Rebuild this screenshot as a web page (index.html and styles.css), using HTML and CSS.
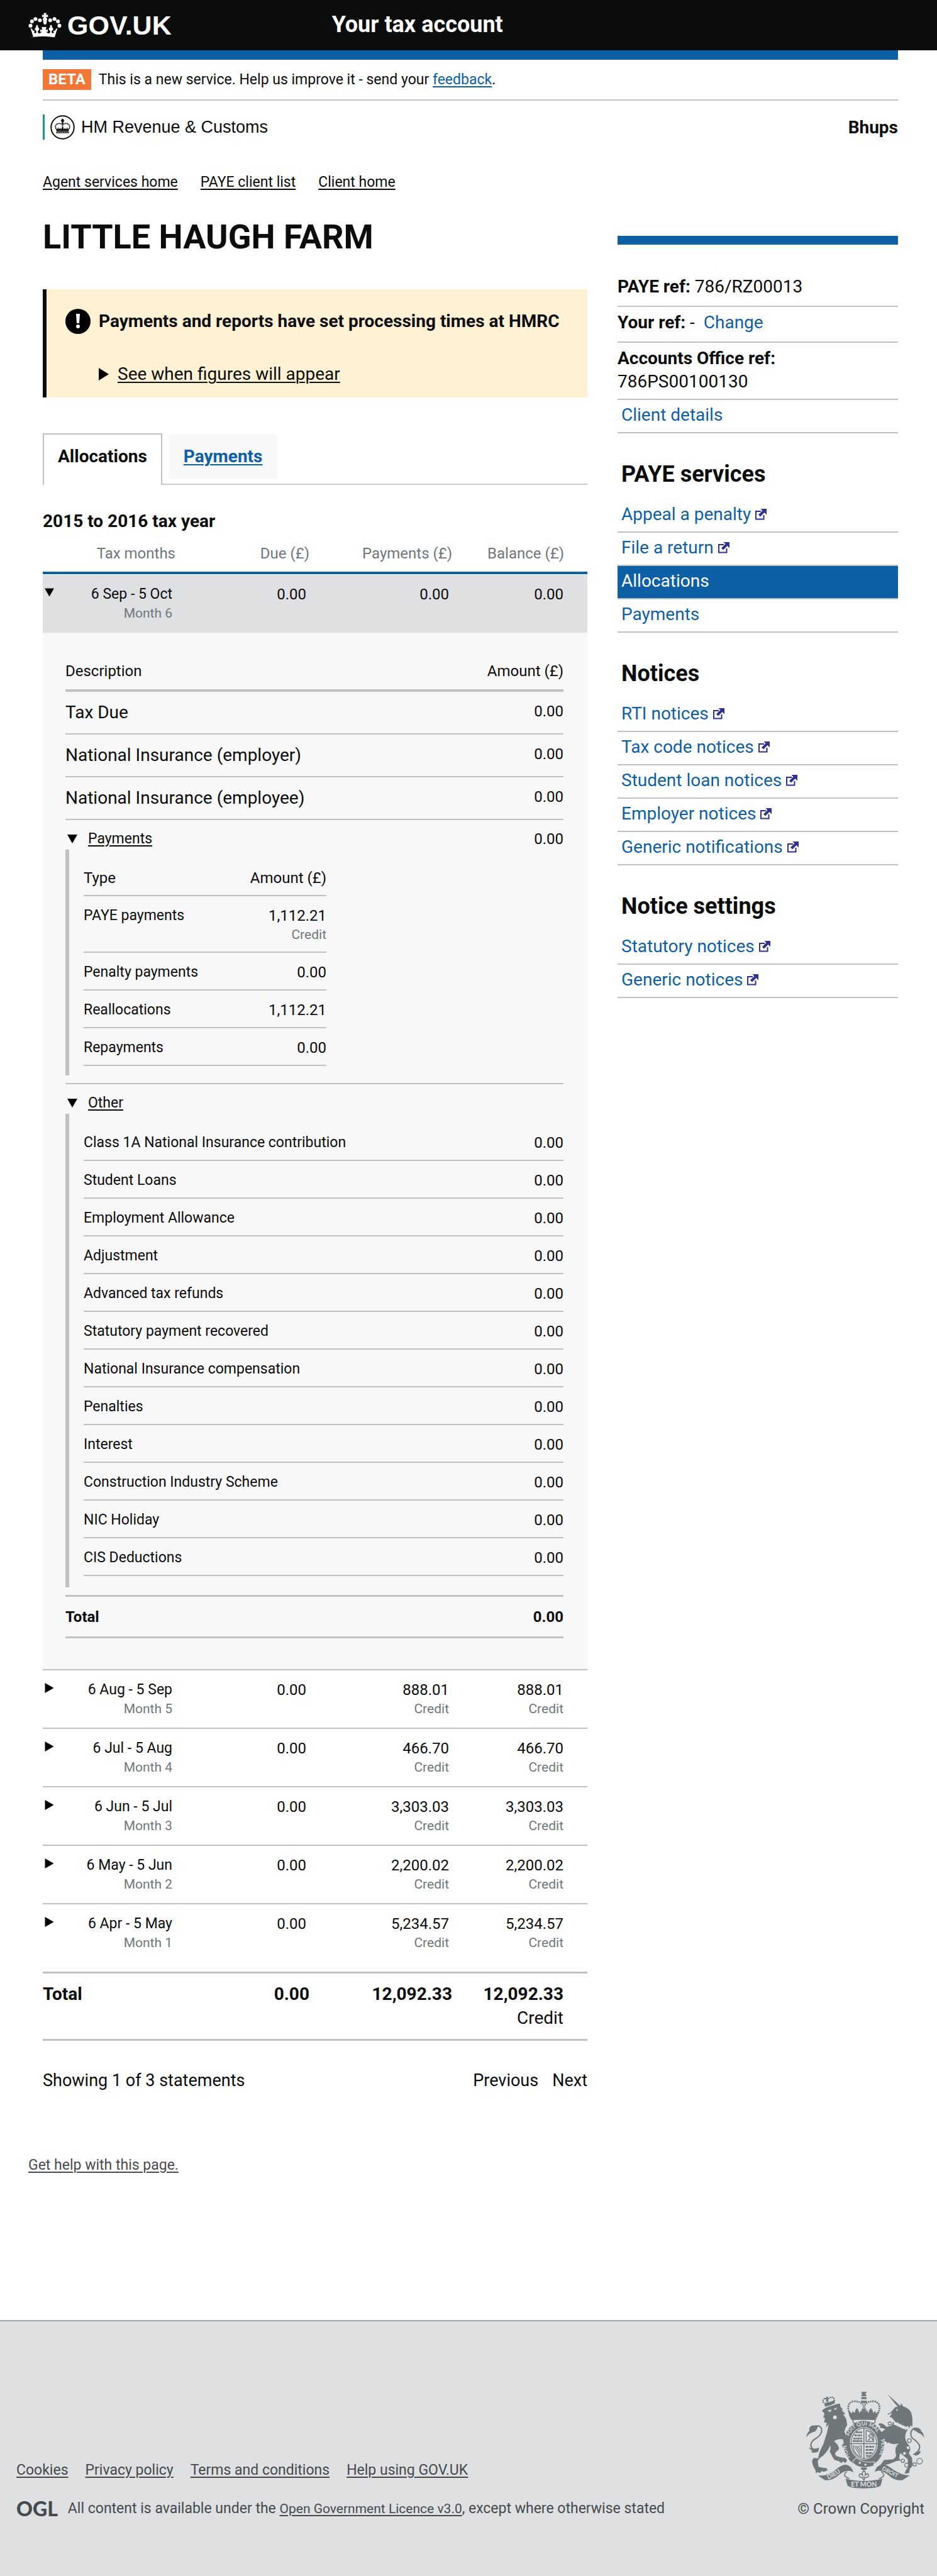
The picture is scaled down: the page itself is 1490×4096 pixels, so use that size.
FILE: index.html
```html
<!DOCTYPE html>
<html lang="en">
<head>
<meta charset="utf-8">
<meta name="viewport" content="width=device-width, initial-scale=1">
<title>Your tax account - LITTLE HAUGH FARM</title>
<link rel="stylesheet" href="styles.css">
</head>
<body>
<svg class="defs" aria-hidden="true">
  <symbol id="external" viewBox="0 0 18 18">
    <path d="M9 4H1v12.500h12.500V10" fill="none" stroke="#2e3191" stroke-width="2"/>
    <path d="M8.500 0H18v9.500l-3.500-3.500-6.500 6.500-3-3L11.500 3z" fill="#2e3191"/>
  </symbol>
</svg>

<header class="site-header">
  <a class="logo" href="#">
    <svg class="logo-crown" viewBox="30 30 210 157" aria-hidden="true">
      <g fill="#fff">
        <circle cx="44" cy="112" r="12"/><circle cx="53" cy="85" r="12"/><circle cx="75" cy="70" r="12"/><circle cx="103" cy="78" r="12"/>
        <circle cx="168" cy="78" r="12"/><circle cx="195" cy="70" r="12"/><circle cx="217" cy="85" r="12"/><circle cx="226" cy="112" r="12"/>
        <path d="M126 32h19l-4 13 13-3v17l-14-4q8 10 9 18l-3 8q3 20-11 25-14-5-11-25l-3-8q1-8 9-18l-13 4V42l13 3z"/>
        <path d="M62 185 44 127q12 3 16 17 6-3 11 1-4 3-4 9 3 8 11 4 7-6 0-16-8-2-7-10 2-9 8-10-3-10 6-16 9 6 6 16 6 1 8 10 1 8-7 10-5 12 3 17 15 4 20-10l-10 3v-17l13 4-4-19h30l-4 19 13-4v17l-10-3q5 14 20 10 8-5 3-17-8-2-7-10 2-9 8-10-3-10 6-16 9 6 6 16 6 1 8 10 1 8-7 10-7 10 0 16 8 4 11-4 0-6-4-9 5-4 11-1 4-14 16-17l-18 58q-73-12-146 0z"/>
      </g>
    </svg>
    <span>GOV.UK</span>
  </a>
  <p class="service-name">Your tax account</p>
</header>

<div class="page">
  <div class="beta">
    <strong class="tag">BETA</strong>
    <p>This is a new service. Help us improve it - send your <a href="#">feedback</a>.</p>
  </div>

  <div class="org-row">
    <div class="org">
      <svg class="org-crest" viewBox="62 22 158 158" aria-hidden="true">
        <circle cx="141" cy="101" r="74" fill="#fff" stroke="#0b0c0c" stroke-width="8"/>
        <g fill="#0b0c0c">
          <path d="M135 46h12v7h5v8h-5v7h-12v-7h-5v-8h5z"/><circle cx="141" cy="73" r="6"/>
          <path d="M100 138v-8q41-9 82 0v8z"/>
          <path d="M103 127l-6-22 10 9 4-14 7 14 8-10 5 10 10-18 10 18 5-10 8 10 7-14 4 14 10-9-6 22q-38-8-76 0z"/>
        </g>
        <path d="M99 110q-10-18 5-29 18-11 35 2M183 110q10-18-5-29-18-11-35 2" fill="none" stroke="#0b0c0c" stroke-width="7" stroke-dasharray="6 2"/>
        <path d="M141 78v26" stroke="#0b0c0c" stroke-width="8" stroke-dasharray="5 2"/>
        <path d="M108 134h66" stroke="#fff" stroke-width="3" stroke-dasharray="10 4"/>
      </svg>
      <span>HM Revenue &amp; Customs</span>
    </div>
    <strong class="user">Bhups</strong>
  </div>

  <nav class="crumbs" aria-label="Breadcrumb">
    <a href="#">Agent services home</a>
    <a href="#">PAYE client list</a>
    <a href="#">Client home</a>
  </nav>

  <div class="columns">
    <main>
      <h1>LITTLE HAUGH FARM</h1>

      <section class="notice">
        <div class="notice-head">
          <svg class="notice-icon" viewBox="0 0 40 40" aria-hidden="true">
            <circle cx="20" cy="20" r="20"/>
            <path d="M17 8h6l-1 15h-4z" fill="#fff"/><circle cx="20" cy="28" r="3" fill="#fff"/>
          </svg>
          <strong>Payments and reports have set processing times at HMRC</strong>
        </div>
        <details class="notice-more">
          <summary><svg class="tri" viewBox="0 0 16 20" aria-hidden="true"><path d="M0 0l16 10L0 20z"/></svg><span>See when figures will appear</span></summary>
        </details>
      </section>

      <nav class="tabs" aria-label="Statement views">
        <a class="tab current" href="#" aria-current="page">Allocations</a>
        <a class="tab" href="#">Payments</a>
      </nav>

      <h2 class="year">2015 to 2016 tax year</h2>

      <table class="months">
        <colgroup><col class="c-month"><col class="c-due"><col class="c-paid"><col></colgroup>
        <thead>
          <tr><th scope="col">Tax months</th><th scope="col">Due (£)</th><th scope="col">Payments (£)</th><th scope="col">Balance (£)</th></tr>
        </thead>
        <tbody>
          <tr class="open">
            <td><div class="month"><button class="caret" aria-label="Hide month 6"><svg viewBox="0 0 16 14"><path d="M0 0h16L8 14z"/></svg></button><div>6 Sep - 5 Oct<small>Month 6</small></div></div></td>
            <td>0.00</td><td>0.00</td><td>0.00</td>
          </tr>
          <tr class="panel">
            <td colspan="4">
              <table class="detail">
                <thead><tr><th scope="col">Description</th><th scope="col">Amount (£)</th></tr></thead>
                <tbody>
                  <tr><th scope="row">Tax Due</th><td>0.00</td></tr>
                  <tr><th scope="row">National Insurance (employer)</th><td>0.00</td></tr>
                  <tr><th scope="row">National Insurance (employee)</th><td>0.00</td></tr>
                  <tr class="group"><td colspan="2">
                    <details open>
                      <summary><svg class="tri-down" viewBox="0 0 16 14" aria-hidden="true"><path d="M0 0h16L8 14z"/></svg><span class="label"><u>Payments</u></span><span>0.00</span></summary>
                      <div class="bar bar-payments">
                        <table class="lines short">
                          <thead><tr><th scope="col">Type</th><th scope="col">Amount (£)</th></tr></thead>
                          <tbody>
                            <tr><th scope="row">PAYE payments</th><td>1,112.21<small>Credit</small></td></tr>
                            <tr><th scope="row">Penalty payments</th><td>0.00</td></tr>
                            <tr><th scope="row">Reallocations</th><td>1,112.21</td></tr>
                            <tr><th scope="row">Repayments</th><td>0.00</td></tr>
                          </tbody>
                        </table>
                      </div>
                    </details>
                  </td></tr>
                  <tr class="group"><td colspan="2">
                    <details open>
                      <summary><svg class="tri-down" viewBox="0 0 16 14" aria-hidden="true"><path d="M0 0h16L8 14z"/></svg><span class="label"><u>Other</u></span></summary>
                      <div class="bar">
                        <table class="lines">
                          <tbody>
                            <tr><th scope="row">Class 1A National Insurance contribution</th><td>0.00</td></tr>
                            <tr><th scope="row">Student Loans</th><td>0.00</td></tr>
                            <tr><th scope="row">Employment Allowance</th><td>0.00</td></tr>
                            <tr><th scope="row">Adjustment</th><td>0.00</td></tr>
                            <tr><th scope="row">Advanced tax refunds</th><td>0.00</td></tr>
                            <tr><th scope="row">Statutory payment recovered</th><td>0.00</td></tr>
                            <tr><th scope="row">National Insurance compensation</th><td>0.00</td></tr>
                            <tr><th scope="row">Penalties</th><td>0.00</td></tr>
                            <tr><th scope="row">Interest</th><td>0.00</td></tr>
                            <tr><th scope="row">Construction Industry Scheme</th><td>0.00</td></tr>
                            <tr><th scope="row">NIC Holiday</th><td>0.00</td></tr>
                            <tr><th scope="row">CIS Deductions</th><td>0.00</td></tr>
                          </tbody>
                        </table>
                      </div>
                    </details>
                  </td></tr>
                </tbody>
                <tfoot><tr><th scope="row">Total</th><td>0.00</td></tr></tfoot>
              </table>
            </td>
          </tr>
          <tr>
            <td><div class="month"><button class="caret" aria-label="Show month 5"><svg viewBox="0 0 14 16"><path d="M0 0l14 8-14 8z"/></svg></button><div>6 Aug - 5 Sep<small>Month 5</small></div></div></td>
            <td>0.00</td><td>888.01<small>Credit</small></td><td>888.01<small>Credit</small></td>
          </tr>
          <tr>
            <td><div class="month"><button class="caret" aria-label="Show month 4"><svg viewBox="0 0 14 16"><path d="M0 0l14 8-14 8z"/></svg></button><div>6 Jul - 5 Aug<small>Month 4</small></div></div></td>
            <td>0.00</td><td>466.70<small>Credit</small></td><td>466.70<small>Credit</small></td>
          </tr>
          <tr>
            <td><div class="month"><button class="caret" aria-label="Show month 3"><svg viewBox="0 0 14 16"><path d="M0 0l14 8-14 8z"/></svg></button><div>6 Jun - 5 Jul<small>Month 3</small></div></div></td>
            <td>0.00</td><td>3,303.03<small>Credit</small></td><td>3,303.03<small>Credit</small></td>
          </tr>
          <tr>
            <td><div class="month"><button class="caret" aria-label="Show month 2"><svg viewBox="0 0 14 16"><path d="M0 0l14 8-14 8z"/></svg></button><div>6 May - 5 Jun<small>Month 2</small></div></div></td>
            <td>0.00</td><td>2,200.02<small>Credit</small></td><td>2,200.02<small>Credit</small></td>
          </tr>
          <tr class="last">
            <td><div class="month"><button class="caret" aria-label="Show month 1"><svg viewBox="0 0 14 16"><path d="M0 0l14 8-14 8z"/></svg></button><div>6 Apr - 5 May<small>Month 1</small></div></div></td>
            <td>0.00</td><td>5,234.57<small>Credit</small></td><td>5,234.57<small>Credit</small></td>
          </tr>
        </tbody>
        <tfoot>
          <tr><th scope="row">Total</th><td>0.00</td><td>12,092.33</td><td>12,092.33<span>Credit</span></td></tr>
        </tfoot>
      </table>

      <div class="pager">
        <p>Showing 1 of 3 statements</p>
        <div class="pager-nav"><button>Previous</button><button>Next</button></div>
      </div>
    </main>

    <aside>
      <ul class="refs">
        <li><strong>PAYE ref:</strong> 786/RZ00013</li>
        <li><strong>Your ref:</strong> -&nbsp; <a href="#">Change</a></li>
        <li class="wide-ref"><strong>Accounts Office ref:</strong><br>786PS00100130</li>
      </ul>
      <ul class="links"><li><a href="#">Client details</a></li></ul>

      <h2>PAYE services</h2>
      <ul class="links">
        <li><a href="#">Appeal a penalty <svg class="ext"><use href="#external"/></svg></a></li>
        <li><a href="#">File a return <svg class="ext"><use href="#external"/></svg></a></li>
        <li class="active"><a href="#" aria-current="page">Allocations</a></li>
        <li><a href="#">Payments</a></li>
      </ul>

      <h2>Notices</h2>
      <ul class="links">
        <li><a href="#">RTI notices <svg class="ext"><use href="#external"/></svg></a></li>
        <li><a href="#">Tax code notices <svg class="ext"><use href="#external"/></svg></a></li>
        <li><a href="#">Student loan notices <svg class="ext"><use href="#external"/></svg></a></li>
        <li><a href="#">Employer notices <svg class="ext"><use href="#external"/></svg></a></li>
        <li><a href="#">Generic notifications <svg class="ext"><use href="#external"/></svg></a></li>
      </ul>

      <h2>Notice settings</h2>
      <ul class="links">
        <li><a href="#">Statutory notices <svg class="ext"><use href="#external"/></svg></a></li>
        <li><a href="#">Generic notices <svg class="ext"><use href="#external"/></svg></a></li>
      </ul>
    </aside>
  </div>
</div>

<p class="help"><a href="#">Get help with this page.</a></p>

<footer>
  <div class="footer-main">
    <nav class="footer-links" aria-label="Support">
      <a href="#">Cookies</a><a href="#">Privacy policy</a><a href="#">Terms and conditions</a><a href="#">Help using GOV.UK</a>
    </nav>
    <div class="licence">
      <span class="ogl">OGL</span>
      <p>All content is available under the <a href="#">Open Government Licence v3.0</a>, except where otherwise stated</p>
    </div>
  </div>
  <a class="copyright" href="#">
    <svg class="arms" viewBox="192 96 750 612" aria-hidden="true">
      <defs>
        <path id="garter" d="M476 520A110 127 0 1 1 640 520"/>
        <path id="dieu" d="M332 650Q385 630 434 588"/>
        <path id="droit" d="M670 588Q725 622 790 650"/>
      </defs>
      <g fill="#6f777b">
        <!-- lion -->
        <path d="M292 214l26-18 67-22 21-4 3 20 17 18-10 2 26 28-16-2 20 32 6 38q-14 19-18 44l32 50 2 40-13 12-7-12-8 14-10-10-6 6-6-14 14-16-8-24q-29-4-56 12 30 22 32 52-15 10-25 26l5 14q30 15 60 15l12 15-12 18-15-12-10 12-15-12-28-8q-17-23-27-48l-5-2q10-23 5-43-15 35-45 65-25 15-35 35l5 35q20 10 50 8l8 14-23 10-15-4-10 12-18-6-8 10-4-24q-22-30-20-60l10-15 28 3q7-48 32-88l25-80 10-50-17 22 4-32-17 0 7-28-12-4 8-24z"/>
        <path d="M192 384q4-28 20-40-4-20 10-32 18-8 44 0-4 24-20 36-34 6-54 36z"/>
        <path d="M208 448q20 16 66 2l-6 25q-24 12-46 3l10-9q-14-4-24-21z"/>
        <path d="M306 166q32-2 66-18l2 20q-30 18-62 22z"/>
        <path d="M320 126h10v8h8v9h-8l4 16h-16l2-16h-8v-9h8z"/>
        <circle cx="300" cy="162" r="5"/><circle cx="299" cy="150" r="5"/><circle cx="308" cy="140" r="5"/><circle cx="345" cy="131" r="5"/><circle cx="358" cy="131" r="5"/><circle cx="368" cy="138" r="5"/><circle cx="371" cy="150" r="5"/>
        <!-- unicorn -->
        <path d="M708 110l82 76-12 10q-40-45-70-86z"/>
        <path d="M722 232l36-40 30-4 8-20 10 20q34 10 50 34 16 40 8 96l-12-10-5 20-12-18-8 8-70-32-20-26-16-6 16-24-28 10 4-10z"/>
        <path d="M744 284q40 38 92 50-26 40-10 76l24 34q6 26-8 40l22 32 2 50-16 18-6 26-28 4 8-20 14-20-2-50-46-40q-16 36 2 48l-26 2q-46 20-74 26l-28-2 22-30 54-4q22-10 22-26-14-54 20-76-46 14-72-10l-20-32 24-20z"/>
        <path d="M736 308l-34 10q-22-26-48-22l-4 10 14 6-6 12 20 2 16 8-30 20q0 24 28 44l-10 10 18 4 8 10 12-12-22-36 36-30z"/>
        <path d="M942 388q-8-38-22-44 0-22-38-22-16 2-18 10 18 8 40 24 18 2 38 32z"/>
        <path d="M914 470l-46 22 20 8 18-6 12-16z"/>
        <!-- crown -->
        <path d="M540 96h35l-7 13 7 14h-35l7-14zM545 128h26l6 14h-38zM538 152h40q-2 16-20 16t-20-16z"/>
        <path d="M466 218l16 14 4-16 12 14q6-22 16-32 12 14 14 32l14-18 8 10-8-18h32l-8 18 10-10 12 18q2-18 14-32 12 14 16 32l10-14 6 16 16-14q-8 38-24 56-76-10-146 0-16-20-20-56z"/>
      </g>
      <g fill="none" stroke="#6f777b">
        <path d="M268 472q-50-12-46-44 4-24 40-42 32-24 28-56-10-24-38-18M868 332q-24 26-4 56 44 30 48 54 0 30-36 50" stroke-width="8"/>
        <path d="M486 270q-18-36-26-60-8-44 30-54 40-4 60 20M630 270q18-36 26-60 8-44-30-54-40-4-60 20" stroke-width="11" stroke-dasharray="9 5"/>
        <path d="M554 175v30M564 175v30" stroke-width="5"/>
        <rect x="488" y="270" width="142" height="24" rx="12" stroke-width="6"/>
        <g stroke-width="5">
          <circle cx="722" cy="296" r="10"/><circle cx="712" cy="378" r="12"/><circle cx="846" cy="405" r="12"/><circle cx="805" cy="533" r="11"/><circle cx="830" cy="560" r="13"/><circle cx="880" cy="556" r="11"/><circle cx="911" cy="535" r="18"/>
        </g>
      </g>
      <g fill="#dee0e2"><circle cx="374" cy="257" r="12"/><path d="M326 214l26-6-6 16zM364 206l22-10-4 14zM746 302l6-24 12 22 8-14 10 22 10-12 8 24 12-14 6 26 14-12-6 18z"/><circle cx="838" cy="450" r="9"/><circle cx="815" cy="486" r="9"/><circle cx="768" cy="210" r="5"/></g>
      <!-- garter and shield -->
      <ellipse cx="558" cy="426" rx="129" ry="147" fill="#6f777b"/>
      <ellipse cx="558" cy="422" rx="89" ry="104" fill="#dee0e2"/>
      <ellipse cx="558" cy="422" rx="81" ry="96" fill="none" stroke="#6f777b" stroke-width="5"/>
      <g fill="none" stroke="#6f777b">
        <path d="M558 320v204M468 424h180" stroke-width="6"/>
        <path d="M508 352h40M498 372h50M492 392h56M488 408h60M570 444h54M570 464h50M570 484h44M572 502h32" stroke-width="12" stroke-dasharray="13 3 7 2"/>
        <path d="M572 340q22 2 48 30v40h-48zM586 404l14-20-12-8 12-14 12 10-4 18 8 12" stroke-width="6"/>
        <path d="M488 438q28 10 54 0v70q-46-12-54-70zM500 446l34 52M512 446l24 36M524 446l14 22" stroke-width="5"/>
      </g>
      <path d="M484 540l24-26q50 34 118 26l-6 24q-66 26-118-6z" fill="#6f777b" stroke="#dee0e2" stroke-width="4"/>
      <g fill="#dee0e2"><circle cx="532" cy="546" r="7"/><circle cx="568" cy="558" r="7"/></g>
      <text class="arms-text" font-size="34"><textPath href="#garter" startOffset="2%">HON</textPath></text>
      <text class="arms-text" font-size="34"><textPath href="#garter" startOffset="27%">SOIT QUI MAL</textPath></text>
      <text class="arms-text" font-size="32"><textPath href="#garter" startOffset="77%">PENSE</textPath></text>
      <!-- motto ribbon -->
      <g fill="#6f777b">
        <path d="M266 626q60 6 110-34 40-36 70-34 34 8 46 48-22-14-50-8-24 8-60 38-36 24-70 20z"/>
        <path d="M848 626q-50 0-106-38-40-34-70-32-34 8-46 48 22-14 46-6 30 14 62 42 36 20 68 16z"/>
        <path d="M442 646q116 30 234 0l-12 44q-20 16-106 18-86-2-104-18z"/>
        <path d="M540 576h36v14h-36z"/>
      </g>
      <path d="M450 600q-24 22-10 32 10 10 26 14M668 600q24 22 12 32-10 10-26 14" fill="none" stroke="#6f777b" stroke-width="6"/>
      <path d="M558 594q16 14 6 34 8-14 20-12 10 10-4 22-12 2-22-2-10 4-22 2-14-12-4-22 12-2 20 12-10-20 6-34zM548 638l10 18 10-18" fill="none" stroke="#6f777b" stroke-width="6"/>
      <text class="arms-text" font-size="38"><textPath href="#dieu">DIEU</textPath></text>
      <text class="arms-text" font-size="36"><textPath href="#droit">DROIT</textPath></text>
      <text class="arms-text" font-size="42" x="558" y="696" text-anchor="middle">ET MON</text>
    </svg>
    <span>© Crown Copyright</span>
  </a>
</footer>
</body>
</html>
```
FILE: styles.css
```css
* { box-sizing: border-box; }

body {
  margin: 0;
  background: #fff;
  color: #0b0c0c;
  font: 24px/30px Roboto, "Liberation Sans", sans-serif;
}

p, h1, h2, ul { margin: 0; padding: 0; }
ul { list-style: none; }
a, u { text-decoration-thickness: 2px; text-underline-offset: 3px; }
a { color: #0b0c0c; }
button { padding: 0; border: 0; background: none; color: inherit; font: inherit; }
svg { display: block; flex: none; }
summary { list-style: none; }
.defs { position: absolute; width: 0; height: 0; }

/* Header */
.site-header {
  display: grid;
  grid-template-columns: 1fr 2fr;
  gap: 24px;
  align-items: center;
  height: 80px;
  padding: 0 45px;
  background: #0b0c0c;
  color: #fff;
}
.logo {
  display: flex;
  align-items: center;
  gap: 9px;
  color: #fff;
  font: bold 43px/48px "Liberation Sans", Arial, sans-serif;
  text-decoration: none;
}
.logo-crown { width: 53px; height: 40px; }
.service-name { padding-bottom: 2px; font-size: 36px; line-height: 45px; font-weight: bold; }

.page { margin: 0 62px 0 68px; border-top: 15px solid #0e60a6; }

.beta {
  display: flex;
  align-items: center;
  gap: 12px;
  padding: 15px 0;
  border-bottom: 2px solid #bfc1c3;
  font-size: 23px;
}
.beta a { color: #0e60a6; }
.tag { padding: 0 9px; background: #f47738; color: #fff; font-size: 24px; line-height: 33px; }

.org-row { display: flex; justify-content: space-between; align-items: center; margin-top: 22px; }
.org {
  display: flex;
  align-items: center;
  gap: 10px;
  padding-left: 9px;
  border-left: 3px solid #159588;
  font: 27px/40px "Liberation Sans", Arial, sans-serif;
}
.org-crest { width: 39px; height: 39px; }
.user { padding-top: 2px; font-size: 28px; line-height: 38px; }

.crumbs { display: flex; gap: 36px; margin-top: 53px; font-size: 23px; }

.columns { display: grid; grid-template-columns: 866fr 446fr; gap: 48px; align-items: start; margin-top: 40px; }

h1 { padding-top: 2px; font-size: 54px; line-height: 60px; }

/* Processing-time notice */
.notice {
  margin-top: 53px;
  padding: 31px 30px 18px;
  border-left: 6px solid #0b0c0c;
  background: #fff1d4;
  font-size: 28px;
  line-height: 38px;
}
.notice-head { display: flex; align-items: center; gap: 13px; }
.notice-icon { width: 40px; height: 40px; }
.notice-more { margin: 45px 0 0 53px; }
.notice-more summary { display: flex; align-items: center; gap: 14px; text-decoration: underline 2px; text-underline-offset: 3px; }
.tri { width: 16px; height: 20px; }

/* Tabs */
.tabs {
  display: flex;
  align-items: flex-start;
  gap: 10px;
  margin-top: 57px;
  border-bottom: 2px solid #c9cacc;
  font-size: 28px;
  line-height: 38px;
  font-weight: bold;
}
.tab { margin-top: 2px; padding: 16px 24px; background: #f8f8f8; color: #0e60a6; }
.tab.current {
  margin: 0 0 -2px;
  padding: 16px 22px 26px;
  border: 2px solid #bfc1c3;
  border-bottom: 0;
  background: #fff;
  color: #0b0c0c;
  text-decoration: none;
}

.year { margin-top: 39px; font-size: 28px; line-height: 38px; }

/* Tables */
table { width: 100%; border-collapse: separate; border-spacing: 0; }
th, td { padding: 0; font-weight: normal; text-align: right; vertical-align: top; }
small { display: block; color: #6f777b; font-size: 21px; line-height: 30px; }

.months { table-layout: fixed; margin-top: 17px; }
.c-month { width: 211px; }
.c-due { width: 213px; }
.c-paid { width: 227px; }
.months > thead th { padding-bottom: 14px; border-bottom: 4px solid #0e60a6; color: #6f777b; }
.months > thead th:last-child { padding-right: 37px; }
.months > tbody > tr > td { padding: 16px 5px 15px 0; border-bottom: 2px solid #bfc1c3; }
.months > tbody > tr > td:last-child { padding-right: 38px; }
.months > tbody > .open > td { border-top: 1px solid #fff; border-bottom: 0; padding-bottom: 16px; background: #dee0e2; background-clip: padding-box; }
.months > tbody > .last > td { padding-bottom: 31px; border-bottom: 3px solid #bfc1c3; }
.months > tbody > .panel > td { padding: 46px 36px 49px; background: #f8f8f8; }
.months > tfoot th, .months > tfoot td {
  padding: 14px 0;
  border-bottom: 3px solid #bfc1c3;
  font-size: 28px;
  line-height: 38px;
  font-weight: bold;
}
.months > tfoot th { text-align: left; }
.months > tfoot td:last-child { padding-right: 38px; }
.months > tfoot span { display: block; font-weight: normal; }
.month { display: flex; justify-content: space-between; align-items: flex-start; font-size: 23px; }
.caret { margin: 4px 0 0 3px; }
.caret svg { width: 15px; height: 16px; }

.detail th:first-child, .lines th:first-child { text-align: left; }
.detail > thead th { padding-bottom: 14px; border-bottom: 4px solid #bfc1c3; }
.detail > tbody > tr > * { padding: 14px 0; border-bottom: 2px solid #bfc1c3; }
.detail > tbody > tr > th { font-size: 28px; line-height: 38px; }
.detail > tbody > tr > td { padding-top: 16px; }
.detail > tbody > .group > td { padding: 15px 0 12px; text-align: left; }
.detail > tbody > .group:last-child > td { border-bottom: 0; }
.detail > tfoot > tr > * { padding: 17px 0 16px; border: solid #bfc1c3; border-width: 3px 0; font-weight: bold; }

.detail summary { display: flex; align-items: center; }
.detail .label { flex: 1; font-size: 23px; }
.tri-down { width: 16px; height: 14px; margin: 0 17px 0 3px; }
.bar { margin-top: 2px; padding: 15px 0 18px 23px; border-left: 6px solid #bfc1c3; }
.bar-payments { padding: 14px 0 15px 23px; }
.lines th, .lines td { padding: 16px 0 12px; border-bottom: 2px solid #bfc1c3; }
.lines tbody th { font-size: 23px; }
.lines.short { width: 386px; }

.pager { display: flex; justify-content: space-between; margin-top: 44px; font-size: 27px; line-height: 38px; }
.pager-nav { display: flex; gap: 22px; }

/* Sidebar */
aside { margin-top: 30px; border-top: 14px solid #0e60a6; font-size: 28px; line-height: 37px; }
aside li { padding: 6px 0 12px; border-bottom: 2px solid #bfc1c3; }
aside a { color: #0e60a6; text-decoration: none; }
aside h2 { margin: 43px 0 17px; padding-left: 6px; font-size: 36px; line-height: 45px; }
.refs { padding-top: 42px; }
.refs .wide-ref { padding-bottom: 9px; }
.links li { padding: 5px 6px 9px; }
.links .active { background: #0e60a6; }
.links .active a { color: #fff; }
.ext { display: inline-block; width: 18px; height: 18px; }

.help { margin: 101px 45px 231px; font-size: 23px; }
.help a { color: #494c4e; }

/* Footer */
footer {
  display: flex;
  justify-content: space-between;
  align-items: flex-end;
  padding: 112px 20px 93px 26px;
  border-top: 2px solid #a1acb2;
  background: #dee0e2;
  color: #454a4c;
}
footer a { color: #454a4c; }
.footer-main { font-size: 23px; }
.footer-links { display: flex; gap: 27px; }
.licence { display: flex; align-items: center; gap: 16px; margin-top: 31px; }
.licence a { font-size: 21px; }
.ogl { font: 900 32px/30px Lato, sans-serif; }
.copyright { display: flex; flex-direction: column; align-items: flex-end; gap: 17px; text-decoration: none; }
.arms { width: 188px; height: 154px; }
.arms-text { fill: #dee0e2; font-family: Lato, sans-serif; font-weight: bold; }
```
